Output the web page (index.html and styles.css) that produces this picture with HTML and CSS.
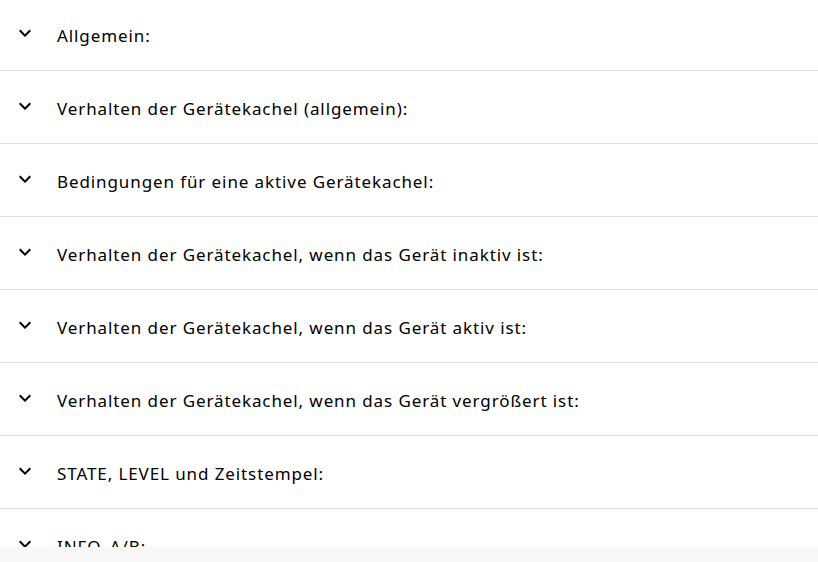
FILE: index.html
```html
<!DOCTYPE html>
<html>
<head>
    <link rel="stylesheet" href="styles.css">
</head>
<body>
    <div class="page">
        <div class="panel-list">
            <div class="panel"><span class="chevron"><svg viewBox="0 0 24 24"><path d="M16.59 8.59L12 13.17 7.41 8.59 6 10l6 6 6-6z"/></svg></span><span class="panel-title">Allgemein:</span></div>
            <div class="panel"><span class="chevron"><svg viewBox="0 0 24 24"><path d="M16.59 8.59L12 13.17 7.41 8.59 6 10l6 6 6-6z"/></svg></span><span class="panel-title">Verhalten der Gerätekachel (allgemein):</span></div>
            <div class="panel"><span class="chevron"><svg viewBox="0 0 24 24"><path d="M16.59 8.59L12 13.17 7.41 8.59 6 10l6 6 6-6z"/></svg></span><span class="panel-title">Bedingungen für eine aktive Gerätekachel:</span></div>
            <div class="panel"><span class="chevron"><svg viewBox="0 0 24 24"><path d="M16.59 8.59L12 13.17 7.41 8.59 6 10l6 6 6-6z"/></svg></span><span class="panel-title">Verhalten der Gerätekachel, wenn das Gerät inaktiv ist:</span></div>
            <div class="panel"><span class="chevron"><svg viewBox="0 0 24 24"><path d="M16.59 8.59L12 13.17 7.41 8.59 6 10l6 6 6-6z"/></svg></span><span class="panel-title">Verhalten der Gerätekachel, wenn das Gerät aktiv ist:</span></div>
            <div class="panel"><span class="chevron"><svg viewBox="0 0 24 24"><path d="M16.59 8.59L12 13.17 7.41 8.59 6 10l6 6 6-6z"/></svg></span><span class="panel-title">Verhalten der Gerätekachel, wenn das Gerät vergrößert ist:</span></div>
            <div class="panel"><span class="chevron"><svg viewBox="0 0 24 24"><path d="M16.59 8.59L12 13.17 7.41 8.59 6 10l6 6 6-6z"/></svg></span><span class="panel-title">STATE, LEVEL und Zeitstempel:</span></div>
            <div class="panel"><span class="chevron"><svg viewBox="0 0 24 24"><path d="M16.59 8.59L12 13.17 7.41 8.59 6 10l6 6 6-6z"/></svg></span><span class="panel-title">INFO_A/B:</span></div>
        </div>
        <div class="footer-bar"></div>
    </div>
</body>
</html>
```

FILE: styles.css
```css
/* Page frame */
html, body {
    margin: 0;
    padding: 0;
    background-color: #fff;
}

.page {
    height: 100vh;
    display: flex;
    flex-direction: column;
    overflow: hidden;
}

/* Collapsible panels */
.panel-list {
    flex: 1;
    overflow: hidden;
    margin-top: -2px;
}

.panel {
    height: 73px;
    display: flex;
    align-items: center;
    padding: 0 0 2px 13px;
    box-sizing: border-box;
    border-bottom: 1px solid #e0e0e0;
}

.chevron {
    width: 24px;
    height: 24px;
    margin-right: 20px;
}

.chevron svg {
    display: block;
    width: 24px;
    height: 24px;
    fill: #000;
}

.panel-title {
    font-family: "Noto Sans", sans-serif;
    font-size: 17px;
    letter-spacing: 0.9px;
    padding-top: 4px;
    color: #000;
}

/* Bottom bar */
.footer-bar {
    height: 15px;
    background-color: #f8f8f8;
}
```
